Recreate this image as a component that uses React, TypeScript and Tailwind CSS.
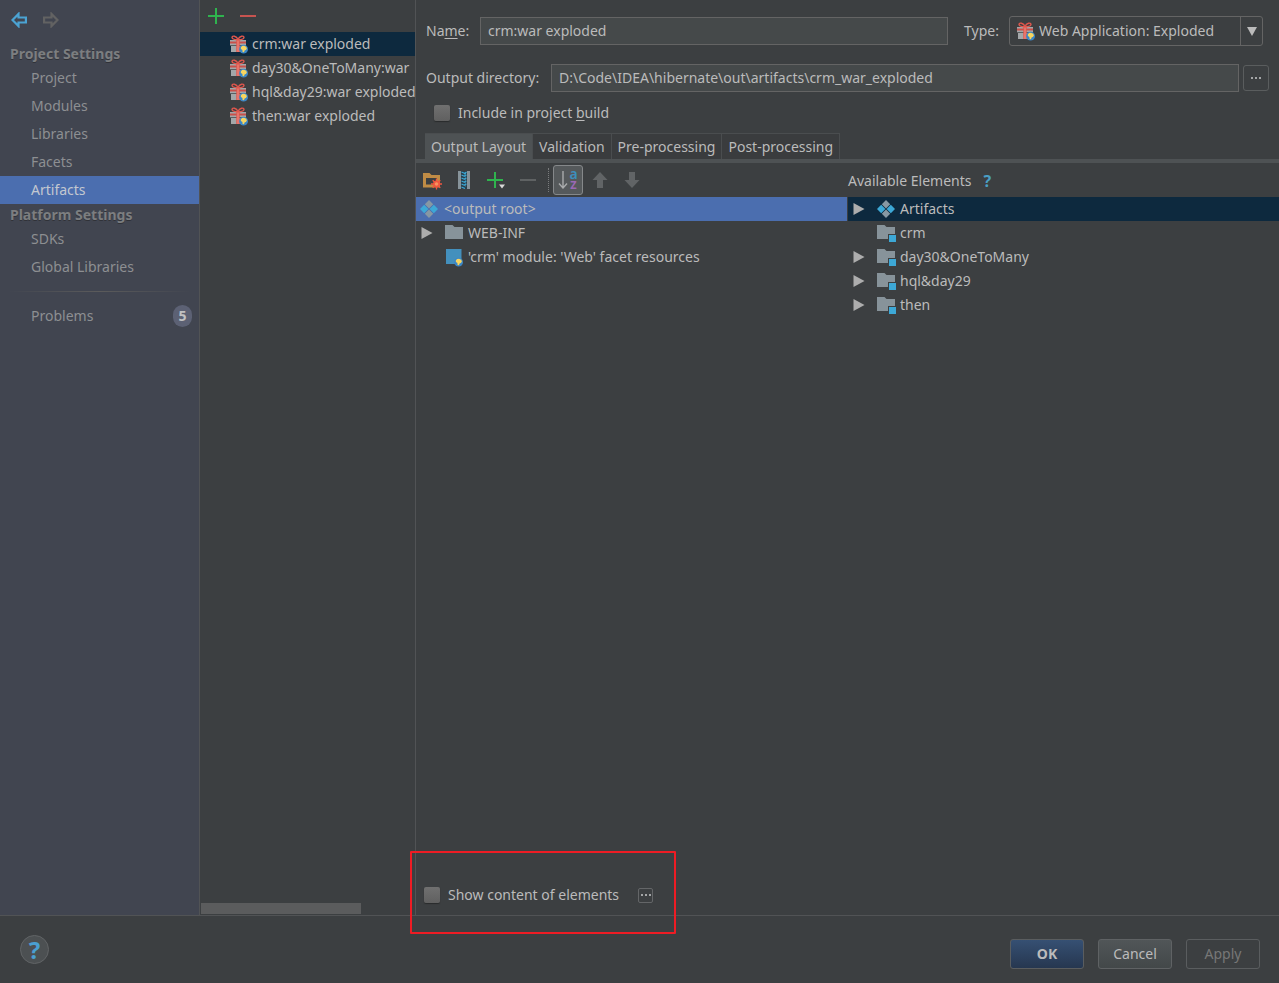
import { useState } from 'react'
import type { ReactNode } from 'react'
import clsx from 'clsx'

const PROJECT_ITEMS = ['Project', 'Modules', 'Libraries', 'Facets', 'Artifacts']
const PLATFORM_ITEMS = ['SDKs', 'Global Libraries']
const ARTIFACTS = ['crm:war exploded', 'day30&OneToMany:war', 'hql&day29:war exploded', 'then:war exploded']
const TABS = ['Output Layout', 'Validation', 'Pre-processing', 'Post-processing']
const MODULES = [
  { name: 'crm', expandable: false },
  { name: 'day30&OneToMany', expandable: true },
  { name: 'hql&day29', expandable: true },
  { name: 'then', expandable: true },
]

/* Icons */

function NavArrow({ className }: { className?: string }) {
  return (
    <svg className={clsx('h-4 w-4', className)} viewBox="0 0 16 16" fill="none" stroke="currentColor" strokeWidth="2.2">
      <path d="M1.500 8 7.500 1.900V5.500H14.900V10.500H7.500V14.100Z" />
    </svg>
  )
}

function GlobeBadge() {
  return (
    <>
      <circle cx="13.600" cy="14.200" r="4.400" fill="#3b86c6" />
      <path d="M10.800 12.400 12 11l2-.2 2.200.9.700 1.900-1 1.400-1.100.3-.9 2-1.300-.3-.2-2.100-1.500-.8z" fill="#f7d560" />
    </>
  )
}

function GiftIcon() {
  return (
    <svg className="h-[18px] w-[18px] shrink-0 overflow-visible" viewBox="0 0 18 18">
      <path d="M0 5h16v5H0zM1 11h14v6H1z" fill="#a3a7a9" />
      <path d="M0 10h16v1H0z" fill="#5b5f61" />
      <path d="M0 6.5h16v2H0z" fill="#c8504a" />
      <path d="M6.3 5h3.4v12H6.3z" fill="#e0574d" />
      <path d="M8 5v12" stroke="#f09186" strokeWidth="1" />
      <path d="M8 4.6C6 4.8 2 4.6 2 2.6 2 .2 6.5.6 8 4.6 9.500.6 14 .2 14 2.6c0 2-4 2.200-6 2Z" fill="none" stroke="#e0574d" strokeWidth="1.400" />
      <GlobeBadge />
    </svg>
  )
}

function DiamondsIcon() {
  return (
    <svg className="h-[18px] w-[18px] shrink-0" viewBox="0 0 18 18">
      <path d="M9 0l4.200 4.200L9 8.400 4.800 4.200zM9 9.600l4.200 4.200L9 18l-4.200-4.200z" fill="#8798a3" />
      <path d="M4.200 4.800 8.400 9l-4.200 4.200L0 9zM13.800 4.800 18 9l-4.200 4.200L9.600 9z" fill="#3da8d6" />
    </svg>
  )
}

function FolderIcon({ module }: { module?: boolean }) {
  return (
    <svg className="h-[18px] w-[19px] shrink-0" viewBox="0 0 19 18">
      <path d="M0 1h7.500l2 2H18v12H0z" fill="#87939a" />
      {module && <path d="M11 10h8v8h-8z" fill="#3c3f41" />}
      {module && <path d="M12 11h7v7h-7z" fill="#3da8d6" />}
    </svg>
  )
}

function WebFacetIcon() {
  return (
    <svg className="h-[18px] w-[19px] shrink-0 overflow-visible" viewBox="0 0 19 18">
      <path d="M1 1h15.500v15H1z" fill="#4390bd" />
      <GlobeBadge />
    </svg>
  )
}

function Triangle() {
  return (
    <svg className="h-3 w-3 shrink-0" viewBox="0 0 12 12">
      <path d="M.5 0 11.500 6 .5 12z" fill="#adadad" />
    </svg>
  )
}

function NewFolderIcon() {
  return (
    <svg className="h-[18px] w-[18px] overflow-visible" viewBox="0 0 18 18">
      <path d="M0 2h6.500l2 2H17v12.500H0zM3 7v6.500h11V7z" fill="#c08c45" fillRule="evenodd" />
      <circle cx="13.500" cy="13" r="3.400" fill="#f0563f" />
      <path d="M13.500 7.500v11M8 13h11M9.700 9.200l7.600 7.600M17.300 9.200l-7.600 7.600" stroke="#f0563f" strokeWidth="1.300" />
      <circle cx="13.500" cy="13" r="1.800" fill="#f7925f" />
    </svg>
  )
}

function ZipIcon() {
  return (
    <svg className="h-[18px] w-3" viewBox="0 0 12 18">
      <path d="M0 0h3v18H0zM9 0h3v18H9z" fill="#87939a" />
      <path d="M3 0h6v18H3z" fill="#2b3f4a" />
      <path d="M3.500 1 8 3M3.500 4 8 6M3.500 7 8 9M3.500 10 8 12M3.500 13 8 15M3.500 16 7 17.500M8.500 1 6 3M8.500 4 6 5M8.500 7 6 8M8.500 10 6 11M8.500 13 6 14" stroke="#3da8d6" strokeWidth="1.200" />
    </svg>
  )
}

function AddIcon({ menu }: { menu?: boolean }) {
  return (
    <svg className="h-[18px] w-[18px] shrink-0" viewBox="0 0 18 18">
      <path d="M8 1v16M0 9h16" stroke="#2fb34e" strokeWidth="2" />
      {menu && <path d="M12 13.500h6l-3 4z" fill="#d8d8d8" />}
    </svg>
  )
}

function RemoveIcon() {
  return (
    <svg className="h-4 w-4" viewBox="0 0 16 16">
      <path d="M0 8h16" stroke="currentColor" strokeWidth="2" />
    </svg>
  )
}

function SortIcon() {
  return (
    <span className="flex items-center gap-px">
      <svg className="h-[18px] w-[10px]" viewBox="0 0 10 18">
        <path d="M5 0v17M1 12.500l4 4.500 4-4.500" fill="none" stroke="#a9abac" strokeWidth="1.400" />
      </svg>
      <span className="flex flex-col pb-[2px] text-[14px] leading-[10px] font-semibold">
        <span className="text-[#3d8fbd]">a</span>
        <span className="text-[#9a68b5]">z</span>
      </span>
    </span>
  )
}

function MoveIcon({ down }: { down?: boolean }) {
  return (
    <svg className={clsx('h-4 w-4', down && 'rotate-180')} viewBox="0 0 16 16">
      <path d="M8 0 15.500 8H11v8H5V8H.5z" fill="#616466" />
    </svg>
  )
}

function Dots() {
  return (
    <svg className="h-[2px] w-[10px]" viewBox="0 0 10 2">
      <path d="M0 0h2v2H0zM4 0h2v2H4zM8 0h2v2H8z" fill="#a4a6a7" />
    </svg>
  )
}

/* Controls */

function ToolButton({ label, disabled, children }: { label: string; disabled?: boolean; children: ReactNode }) {
  return (
    <button
      type="button"
      aria-label={label}
      disabled={disabled}
      className={clsx('flex h-[30px] w-8 items-center justify-center', disabled && 'text-[#5f6263]')}
    >
      {children}
    </button>
  )
}

function CheckBox({ id }: { id: string }) {
  return (
    <input
      id={id}
      type="checkbox"
      className="h-4 w-4 shrink-0 appearance-none rounded-[2px] bg-linear-to-b from-[#707070] to-[#606060] shadow-[0_1px_1px_#292b2c] checked:from-[#4b6eaf] checked:to-[#4b6eaf]"
    />
  )
}

function SideItem({ label, active, onClick, children }: { label: string; active?: boolean; onClick: () => void; children?: ReactNode }) {
  return (
    <button
      type="button"
      onClick={onClick}
      className={clsx(
        'flex h-7 w-full items-center justify-between pr-[7px] pl-[31px] text-left',
        active ? 'bg-[#4b6eaf] text-[#c3c8d0]' : 'text-[#8d8f92]'
      )}
    >
      {label}
      {children}
    </button>
  )
}

function SideHeading({ children }: { children: ReactNode }) {
  return (
    <h2 className="px-[10px] leading-[21px] font-bold text-[#7c7e80] [text-shadow:0_1px_0_#303238]">{children}</h2>
  )
}

function Sidebar() {
  const [section, setSection] = useState('Artifacts')
  const renderItem = (label: string) => (
    <SideItem key={label} label={label} active={label === section} onClick={() => setSection(label)} />
  )

  return (
    <nav className="w-[200px] shrink-0 border-r border-[#515355] bg-[#414550]">
      <div className="flex h-[43px] items-start gap-4 px-[11px] pt-3">
        <button type="button" aria-label="Back" className="text-[#4ba3d3]">
          <NavArrow />
        </button>
        <button type="button" aria-label="Forward" disabled className="text-[#626262]">
          <NavArrow className="rotate-180" />
        </button>
      </div>
      <SideHeading>Project Settings</SideHeading>
      {PROJECT_ITEMS.map(renderItem)}
      <SideHeading>Platform Settings</SideHeading>
      {PLATFORM_ITEMS.map(renderItem)}
      <div className="mx-2 my-[10px] h-px bg-linear-to-r from-transparent via-[#5b5b5b] to-transparent" />
      <SideItem label="Problems" active={section === 'Problems'} onClick={() => setSection('Problems')}>
        <span className="flex h-[22px] w-[19px] items-center justify-center rounded-full bg-[#5c6174] font-bold text-[#c0c1c3]">5</span>
      </SideItem>
    </nav>
  )
}

function ArtifactList() {
  const [selected, setSelected] = useState(0)

  return (
    <section className="flex w-[216px] shrink-0 flex-col border-r border-[#515355]">
      <div className="flex h-8 items-center gap-[14px] px-2">
        <button type="button" aria-label="Add artifact">
          <AddIcon />
        </button>
        <button type="button" aria-label="Remove artifact" className="text-[#c75450]">
          <RemoveIcon />
        </button>
      </div>
      <ul>
        {ARTIFACTS.map((name, i) => (
          <li key={name}>
            <button
              type="button"
              onClick={() => setSelected(i)}
              className={clsx('flex h-6 w-full items-center gap-1 overflow-hidden pl-[30px] whitespace-nowrap', i === selected && 'bg-[#0d293e]')}
            >
              <GiftIcon />
              {name}
            </button>
          </li>
        ))}
      </ul>
      <div className="mt-auto mb-px ml-px h-[11px] w-40 bg-[#5b5c5d]" />
    </section>
  )
}

function TreeRow({ icon, label, expandable, className }: { icon: ReactNode; label: string; expandable?: boolean; className?: string }) {
  return (
    <li className={clsx('flex h-6 items-center pl-[5px] whitespace-nowrap', className)}>
      <span className="mr-3 w-3">{expandable && <Triangle />}</span>
      <span className="flex w-[19px] shrink-0">{icon}</span>
      <span className="ml-1">{label}</span>
    </li>
  )
}

function OutputLayout() {
  return (
    <div className="flex">
      <div className="min-w-0 flex-1 border-r border-[#3c3f41]">
        <div className="flex h-[34px] items-center">
          <ToolButton label="Create directory"><NewFolderIcon /></ToolButton>
          <ToolButton label="Create archive"><ZipIcon /></ToolButton>
          <ToolButton label="Add copy of"><AddIcon menu /></ToolButton>
          <ToolButton label="Remove" disabled><RemoveIcon /></ToolButton>
          <span className="mx-1 h-6 border-l border-dotted border-[#7a7c7d]" />
          <button
            type="button"
            aria-label="Sort elements"
            aria-pressed="true"
            className="mr-px flex h-[30px] w-[30px] items-center justify-center rounded-[3px] border border-[#85888a] bg-[#55595b]"
          >
            <SortIcon />
          </button>
          <ToolButton label="Move up" disabled><MoveIcon /></ToolButton>
          <ToolButton label="Move down" disabled><MoveIcon down /></ToolButton>
        </div>
        <ul>
          <li className="flex h-6 items-center gap-[6px] bg-[#4b6eaf] pl-1">
            <DiamondsIcon />
            &lt;output root&gt;
          </li>
          <TreeRow icon={<FolderIcon />} label="WEB-INF" expandable />
          <TreeRow icon={<WebFacetIcon />} label="'crm' module: 'Web' facet resources" />
        </ul>
      </div>
      <div className="min-w-0 flex-1">
        <div className="flex h-[34px] items-center gap-3 pt-px">
          Available Elements
          <button type="button" aria-label="Elements help" className="text-base font-bold text-[#4a9fc4]">?</button>
        </div>
        <ul>
          <TreeRow icon={<DiamondsIcon />} label="Artifacts" expandable className="bg-[#0d293e]" />
          {MODULES.map((m) => (
            <TreeRow key={m.name} icon={<FolderIcon module />} label={m.name} expandable={m.expandable} />
          ))}
        </ul>
      </div>
    </div>
  )
}

function ArtifactEditor() {
  const [name, setName] = useState('crm:war exploded')
  const [output, setOutput] = useState('D:\\Code\\IDEA\\hibernate\\out\\artifacts\\crm_war_exploded')
  const [tab, setTab] = useState(TABS[0])

  return (
    <section className="flex min-w-0 flex-1 flex-col">
      <div className="flex items-center pt-4 pr-4 pl-[10px]">
        <label htmlFor="name" className="w-[54px] shrink-0">Na<u className="underline-offset-2">m</u>e:</label>
        <input
          id="name"
          value={name}
          onChange={(e) => setName(e.target.value)}
          className="h-7 min-w-0 flex-1 border border-[#646464] bg-[#45494a] px-[7px] pb-[2px] outline-none"
        />
        <label htmlFor="type" className="mr-2 ml-4 w-[37px] shrink-0 whitespace-nowrap">Type:</label>
        <div className="relative w-[254px] shrink-0">
          <select
            id="type"
            className="h-[30px] w-full appearance-none rounded-[3px] border border-[#646464] bg-[#3c3f41] pl-[29px] outline-none"
          >
            <option>Web Application: Exploded</option>
          </select>
          <span className="pointer-events-none absolute inset-y-0 left-2 flex items-center">
            <GiftIcon />
          </span>
          <span className="pointer-events-none absolute inset-y-0 right-0 flex w-[23px] items-center justify-center border-l border-[#646464]">
            <svg className="h-[9px] w-[10px]" viewBox="0 0 10 9">
              <path d="M0 0h10L5 9z" fill="#bbbbbb" />
            </svg>
          </span>
        </div>
      </div>

      <div className="mt-[18px] flex items-center px-[10px]">
        <label htmlFor="output" className="w-[125px] shrink-0 whitespace-nowrap">Output directory:</label>
        <input
          id="output"
          value={output}
          onChange={(e) => setOutput(e.target.value)}
          className="h-7 min-w-0 flex-1 border border-[#646464] bg-[#45494a] px-[7px] pb-[2px] outline-none"
        />
        <button
          type="button"
          aria-label="Browse"
          className="ml-1 flex h-[26px] w-[26px] shrink-0 items-center justify-center rounded-[3px] border border-[#5a5d5e]"
        >
          <Dots />
        </button>
      </div>

      <div className="mt-[10px] flex h-[22px] items-center gap-2 pl-[18px]">
        <CheckBox id="include" />
        <label htmlFor="include">Include in project <u className="underline-offset-2">b</u>uild</label>
      </div>

      <div role="tablist" className="mt-[9px] flex pl-[9px]">
        {TABS.map((t) => (
          <button
            key={t}
            type="button"
            role="tab"
            aria-selected={t === tab}
            onClick={() => setTab(t)}
            className={clsx(
              'h-[26px] border-t border-r border-[#4a4d4f] px-[6px] whitespace-nowrap',
              t === tab ? 'bg-[#4e5254]' : 'bg-[#3a3c3e]'
            )}
          >
            {t}
          </button>
        ))}
      </div>
      <div className="h-1 bg-[#4e5254]" />

      <OutputLayout />

      <div className="relative mt-auto flex h-10 items-center gap-2 pl-2">
        <CheckBox id="show-content" />
        <label htmlFor="show-content">Show content of elements</label>
        <button
          type="button"
          aria-label="Content options"
          className="ml-[11px] flex h-[15px] w-[15px] items-center justify-center rounded-[2px] border border-[#646668]"
        >
          <Dots />
        </button>
        <div className="pointer-events-none absolute -top-6 -left-[6px] h-[83px] w-[266px] rounded-[1px] border-2 border-[#ee1c24]" />
      </div>
    </section>
  )
}

export default function App() {
  return (
    <div className="flex min-h-screen flex-col bg-[#3c3f41] font-['Noto_Sans','Open_Sans',sans-serif] text-[14px] leading-5 text-[#bbbbbb]">
      <main className="flex flex-1">
        <Sidebar />
        <ArtifactList />
        <ArtifactEditor />
      </main>

      <footer className="flex h-[68px] items-center border-t border-[#515355] pt-2 pr-[19px] pl-5">
        <button
          type="button"
          aria-label="Help"
          className="mb-2 flex h-[29px] w-[29px] items-center justify-center rounded-full border border-[#616466] bg-[#4c5052] text-2xl font-bold text-[#4a9fd0]"
        >
          ?
        </button>
        <div className="ml-auto flex gap-[14px]">
          <button type="button" className="h-[30px] w-[74px] rounded-[3px] border border-[#5a5d5f] bg-linear-to-b from-[#365073] to-[#263750] font-bold">OK</button>
          <button type="button" className="h-[30px] w-[74px] rounded-[3px] border border-[#5f6264] bg-linear-to-b from-[#515658] to-[#434849]">Cancel</button>
          <button type="button" disabled className="h-[30px] w-[74px] rounded-[3px] border border-[#5a5d5f] text-[#777777]">Apply</button>
        </div>
      </footer>
    </div>
  )
}
